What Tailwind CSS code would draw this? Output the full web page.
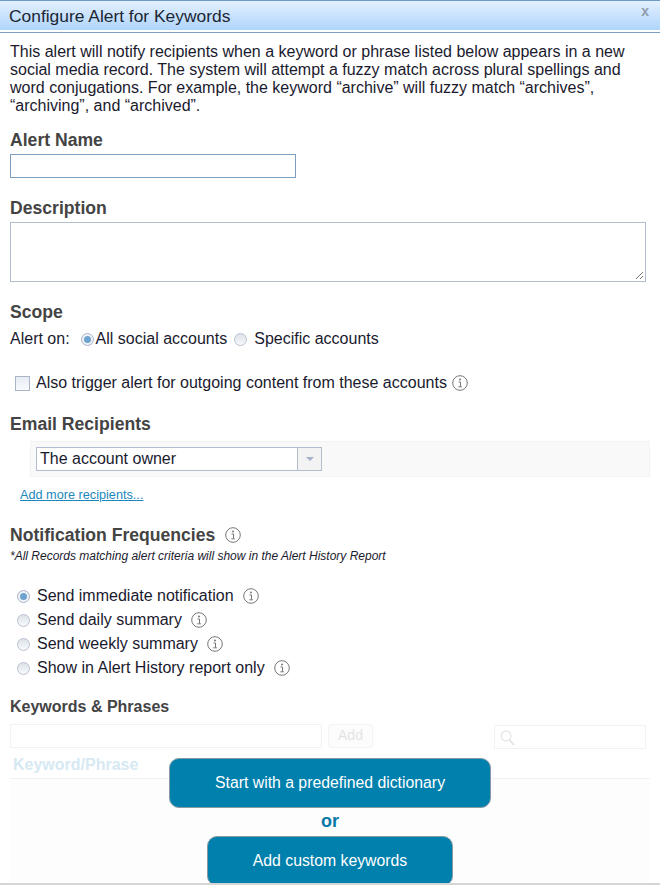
<!DOCTYPE html>
<html lang="en">
  <head>
    <meta charset="UTF-8" />
    <script src="https://cdn.jsdelivr.net/npm/@tailwindcss/browser@4"></script>
    <title>Configure Alert for Keywords</title>
  </head>
  <body class="bg-white font-['Liberation_Sans',Arial,sans-serif] text-[#1a1a2e] h-[885px] w-[660px] overflow-hidden relative">
    <!-- title bar -->
    <div class="h-[33px] border-t border-t-[#6f9ac4] border-b border-b-[#7a9fc0] bg-gradient-to-b from-[#e3f0ff] to-[#acd3fb] shadow-[inset_0_-2px_0_#fff] flex justify-between pl-[9px] pr-[11px]">
      <span class="text-[17.4px] leading-[31px] text-[#1c2733]">Configure Alert for Keywords</span>
      <span class="text-[14px] leading-[21px] font-bold text-[#8f9dab]">x</span>
    </div>

    <div class="px-[10px]">
      <p class="mt-[10px] text-[16px] leading-[18px]">This alert will notify recipients when a keyword or phrase listed below appears in a new social media record. The system will attempt a fuzzy match across plural spellings and word conjugations. For example, the keyword “archive” will fuzzy match “archives”, “archiving”, and “archived”.</p>

      <h3 class="mt-[15px] text-[17.6px] leading-[20px] font-bold text-[#444]">Alert Name</h3>
      <div class="mt-[4px] w-[286px] h-[24px] border border-[#7a9fc0]"></div>

      <h3 class="mt-[20px] text-[17.6px] leading-[20px] font-bold text-[#444]">Description</h3>
      <div class="mt-[4px] w-[636px] h-[60px] border border-[#b4bdd0] relative">
        <svg class="absolute right-[1px] bottom-[1px]" width="9" height="9" viewBox="0 0 9 9"><path d="M1 8 8 1M5 8 8 5" stroke="#777" fill="none"/></svg>
      </div>

      <h3 class="mt-[20px] text-[17.6px] leading-[20px] font-bold text-[#444]">Scope</h3>
      <div class="mt-[8px] flex items-center text-[16px] leading-[18px]">
        <span>Alert on:</span>
        <span class="ml-[11px] w-[13px] h-[13px] rounded-full border border-[#a9b4c6] bg-[#eef2f7] flex items-center justify-center"><span class="w-[7px] h-[7px] rounded-full bg-[#6fa3cf]"></span></span>
        <span class="ml-[2px]">All social accounts</span>
        <span class="ml-[7px] w-[13px] h-[13px] rounded-full border border-[#b9c2cf] bg-gradient-to-b from-[#dde3ea] to-[#f8f9fb]"></span>
        <span class="ml-[7px]">Specific accounts</span>
      </div>

      <div class="mt-[26px] ml-[5px] flex items-center text-[16px] leading-[18px]">
        <span class="w-[15px] h-[15px] border border-[#a9b4c6] bg-gradient-to-b from-[#e8edf4] to-[#f9fafc]"></span>
        <span class="ml-[6px]">Also trigger alert for outgoing content from these accounts</span>
        <svg class="ml-[5px]" width="16" height="16" viewBox="0 0 16 16"><circle cx="8" cy="8" r="7.3" fill="none" stroke="#777"/><path d="M6.5 7h2v4.5M6.3 11.8h3.6" fill="none" stroke="#777"/><circle cx="8" cy="4.6" r="1" fill="#777"/></svg>
      </div>

      <h3 class="mt-[22px] text-[17.6px] leading-[20px] font-bold text-[#444]">Email Recipients</h3>
      <div class="mt-[7px] ml-[20px] w-[620px] h-[36px] bg-[#f9f9f9] border border-[#f3f3f3] px-[5px] pt-[5px]">
        <div class="w-[286px] h-[24px] border border-[#b4bdd0] bg-white flex">
          <span class="flex-1 pl-[3px] text-[16px] leading-[21px]">The account owner</span>
          <span class="w-[24px] bg-[#f3f3f3] border-l border-[#b4bdd0] flex items-center justify-center"><span class="border-x-[4px] border-x-transparent border-t-[4px] border-t-[#a6b2c8]"></span></span>
        </div>
      </div>
      <a class="block mt-[10px] ml-[10px] text-[12.7px] leading-[16px] text-[#1b87bd] underline">Add more recipients...</a>

      <div class="mt-[22px] flex items-center">
        <h3 class="text-[17.6px] leading-[20px] font-bold text-[#444]">Notification Frequencies</h3>
        <svg class="ml-[10px]" width="16" height="16" viewBox="0 0 16 16"><circle cx="8" cy="8" r="7.3" fill="none" stroke="#777"/><path d="M6.5 7h2v4.5M6.3 11.8h3.6" fill="none" stroke="#777"/><circle cx="8" cy="4.6" r="1" fill="#777"/></svg>
      </div>
      <p class="mt-[4px] text-[12px] leading-[14px] italic">*All Records matching alert criteria will show in the Alert History Report</p>

      <div class="mt-[24px] ml-[7px] flex flex-col gap-[6px] text-[16px] leading-[18px]">
        <div class="flex items-center">
          <span class="w-[13px] h-[13px] rounded-full border border-[#a9b4c6] bg-[#eef2f7] flex items-center justify-center"><span class="w-[7px] h-[7px] rounded-full bg-[#6fa3cf]"></span></span>
          <span class="ml-[7px]">Send immediate notification</span>
          <svg class="ml-[9px]" width="16" height="16" viewBox="0 0 16 16"><circle cx="8" cy="8" r="7.3" fill="none" stroke="#777"/><path d="M6.5 7h2v4.5M6.3 11.8h3.6" fill="none" stroke="#777"/><circle cx="8" cy="4.6" r="1" fill="#777"/></svg>
        </div>
        <div class="flex items-center">
          <span class="w-[13px] h-[13px] rounded-full border border-[#b9c2cf] bg-gradient-to-b from-[#dde3ea] to-[#f8f9fb]"></span>
          <span class="ml-[7px]">Send daily summary</span>
          <svg class="ml-[9px]" width="16" height="16" viewBox="0 0 16 16"><circle cx="8" cy="8" r="7.3" fill="none" stroke="#777"/><path d="M6.5 7h2v4.5M6.3 11.8h3.6" fill="none" stroke="#777"/><circle cx="8" cy="4.6" r="1" fill="#777"/></svg>
        </div>
        <div class="flex items-center">
          <span class="w-[13px] h-[13px] rounded-full border border-[#b9c2cf] bg-gradient-to-b from-[#dde3ea] to-[#f8f9fb]"></span>
          <span class="ml-[7px]">Send weekly summary</span>
          <svg class="ml-[9px]" width="16" height="16" viewBox="0 0 16 16"><circle cx="8" cy="8" r="7.3" fill="none" stroke="#777"/><path d="M6.5 7h2v4.5M6.3 11.8h3.6" fill="none" stroke="#777"/><circle cx="8" cy="4.6" r="1" fill="#777"/></svg>
        </div>
        <div class="flex items-center">
          <span class="w-[13px] h-[13px] rounded-full border border-[#b9c2cf] bg-gradient-to-b from-[#dde3ea] to-[#f8f9fb]"></span>
          <span class="ml-[7px]">Show in Alert History report only</span>
          <svg class="ml-[9px]" width="16" height="16" viewBox="0 0 16 16"><circle cx="8" cy="8" r="7.3" fill="none" stroke="#777"/><path d="M6.5 7h2v4.5M6.3 11.8h3.6" fill="none" stroke="#777"/><circle cx="8" cy="4.6" r="1" fill="#777"/></svg>
        </div>
      </div>

      <h3 class="mt-[21px] text-[16px] leading-[18px] font-bold text-[#444]">Keywords &amp; Phrases</h3>
      <div class="mt-[8px] flex items-start">
        <div class="w-[312px] h-[24px] border border-[#f2f2f2]"></div>
        <div class="ml-[6px] w-[45px] h-[24px] border border-[#f4f4f4] rounded-[3px] bg-[#fcfcfc] text-center text-[14px] leading-[20px] text-[#e4e4e4]">Add</div>
        <div class="ml-[121px] mt-[1px] w-[152px] h-[24px] border border-[#f2f2f2] pl-[5px] pt-[4px]">
          <svg width="15" height="16" viewBox="0 0 15 16"><circle cx="6" cy="6" r="5" fill="none" stroke="#e8e8e8" stroke-width="1.4"/><path d="M9.5 10 14 15" stroke="#e8e8e8" stroke-width="2"/></svg>
        </div>
      </div>
      <div class="mt-[3px] h-[27px] w-[640px] border-b border-[#f1f1f1] pl-[3px] text-[16px] leading-[26px] font-bold text-[#d6e9f3]">Keyword/Phrase</div>
      <div class="w-[640px] h-[130px] bg-[#fdfdfd]"></div>
    </div>

    <!-- buttons over the faded table -->
    <div class="absolute left-0 right-0 top-[758px] flex flex-col items-center">
      <button class="w-[322px] h-[50px] rounded-[10px] bg-[#0080ad] border border-[#8a9aa3] text-white text-[15.8px]">Start with a predefined dictionary</button>
      <span class="mt-[1px] text-[18px] leading-[24px] font-bold text-[#0a78a6]">or</span>
      <button class="mt-[3px] w-[246px] h-[50px] rounded-[10px] bg-[#0080ad] border border-[#8a9aa3] text-white text-[15.8px]">Add custom keywords</button>
    </div>

    <!-- window edge -->
    <div class="absolute left-0 right-0 bottom-0 h-[2px] bg-[#d5d5d5]"></div>
  </body>
</html>
